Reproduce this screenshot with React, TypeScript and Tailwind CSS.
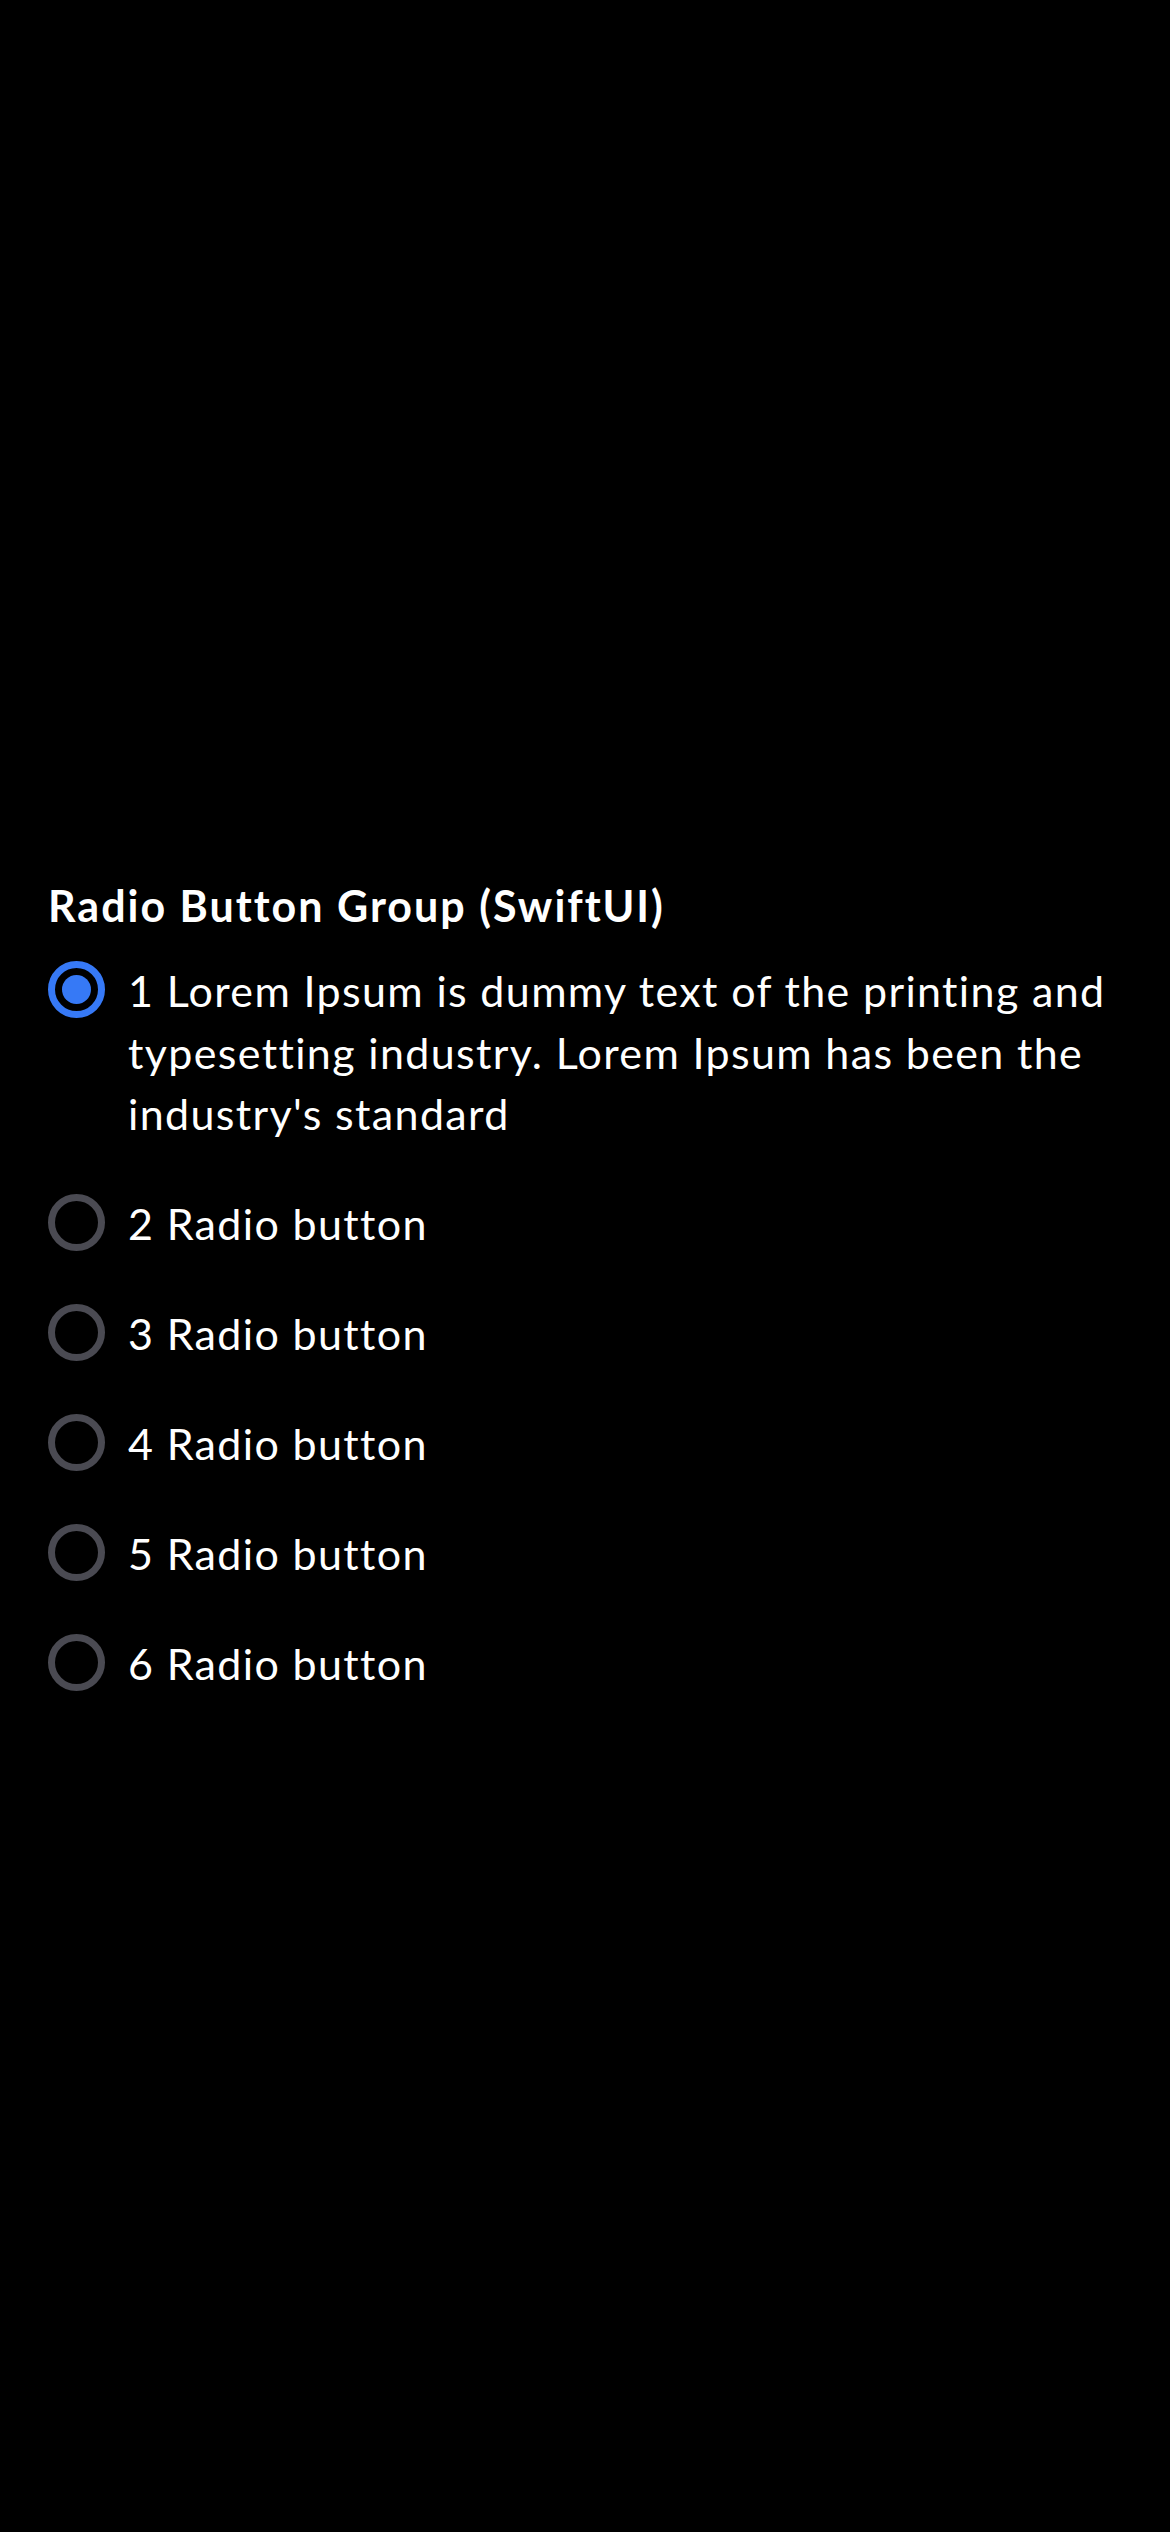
import React, { useState } from 'react';

const options = [
  "1 Lorem Ipsum is dummy text of the printing and typesetting industry. Lorem Ipsum has been the industry's standard",
  '2 Radio button',
  '3 Radio button',
  '4 Radio button',
  '5 Radio button',
  '6 Radio button',
];

const RadioCircle = ({ checked }: { checked: boolean }) => (
  <div
    className={`mt-[1px] w-[57px] h-[57px] shrink-0 rounded-full border-[7px] flex items-center justify-center ${
      checked ? 'border-[#3679f6]' : 'border-[#4a4a52]'
    }`}
  >
    {checked && <div className="w-[29px] h-[29px] rounded-full bg-[#3679f6]" />}
  </div>
);

export default function App() {
  const [selected, setSelected] = useState(0);

  return (
    <div
      className="min-h-screen w-full bg-black text-white pt-[875px] px-[48px]"
      style={{ fontFamily: 'Lato, "Noto Sans", sans-serif' }}
    >
      <h2 className="text-[43px] leading-[61.4px] font-bold tracking-[2px]">Radio Button Group (SwiftUI)</h2>

      <div className="mt-[24px] flex flex-col gap-[48.6px]">
        {options.map((label, i) => (
          <button
            key={i}
            onClick={() => setSelected(i)}
            className="flex items-start gap-[23px] text-left"
          >
            <RadioCircle checked={selected === i} />
            <span className="text-[43px] leading-[61.4px] tracking-[1.35px]">{label}</span>
          </button>
        ))}
      </div>
    </div>
  );
}
